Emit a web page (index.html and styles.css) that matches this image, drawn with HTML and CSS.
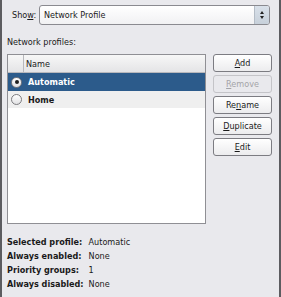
FILE: index.html
```html
<!DOCTYPE html>
<html lang="en">
<head>
    <meta charset="UTF-8">
    <title>Network Profiles</title>
    <link rel="stylesheet" href="styles.css">
</head>
<body>
    <div class="panel">
        <div class="show-row">
            <span class="show-label">Sho<u>w</u>:</span>
            <div class="combo">
                <span class="combo-text">Network Profile</span>
                <span class="combo-spin">
                    <span class="arrow-up"></span>
                    <span class="arrow-down"></span>
                </span>
            </div>
        </div>

        <div class="section-label">Network profiles:</div>

        <div class="main-row">
            <div class="tree">
                <div class="tree-header">
                    <div class="col-check"></div>
                    <div class="col-name">Name</div>
                </div>
                <div class="tree-row selected">
                    <span class="radio checked"></span>
                    <span class="row-name">Automatic</span>
                </div>
                <div class="tree-row alt">
                    <span class="radio"></span>
                    <span class="row-name">Home</span>
                </div>
            </div>

            <div class="buttons">
                <button class="btn"><u>A</u>dd</button>
                <button class="btn" disabled><u>R</u>emove</button>
                <button class="btn">Re<u>n</u>ame</button>
                <button class="btn"><u>D</u>uplicate</button>
                <button class="btn"><u>E</u>dit</button>
            </div>
        </div>

        <div class="info">
            <span class="info-label">Selected profile:</span><span>Automatic</span>
            <span class="info-label">Always enabled:</span><span>None</span>
            <span class="info-label">Priority groups:</span><span>1</span>
            <span class="info-label">Always disabled:</span><span>None</span>
        </div>
    </div>
</body>
</html>
```

FILE: styles.css
```css
body {
    margin: 0;
    padding: 0;
    background: #e9e9ed;
    font-family: "DejaVu Sans Condensed", "DejaVu Sans", sans-serif;
    font-size: 9px;
    color: #1a1a1a;
}

.panel {
    width: 277px;
    height: 297px;
    border-left: 2px solid #5c5c60;
    border-right: 2px solid #5c5c60;
    box-sizing: content-box;
}

u {
    text-decoration: underline;
    text-underline-offset: 1px;
}

.show-row {
    display: flex;
    align-items: center;
    padding: 5px 0 0 10px;
    height: 20px;
}

.show-label {
    width: 27px;
}

.combo {
    display: flex;
    align-items: stretch;
    width: 229px;
    height: 18px;
    border: 1px solid #8a8a90;
    border-radius: 3px;
    background: linear-gradient(to bottom, #ffffff, #f1f1f3);
    overflow: hidden;
}

.combo-text {
    flex: 1;
    display: flex;
    align-items: center;
    padding-left: 4px;
}

.combo-spin {
    width: 14px;
    display: flex;
    flex-direction: column;
    align-items: center;
    justify-content: center;
    gap: 2px;
    background: linear-gradient(to bottom, #d9e1ea, #c7d0da);
    border-left: 1px solid #b4bcc6;
}

.arrow-up {
    width: 0;
    height: 0;
    border-left: 2px solid transparent;
    border-right: 2px solid transparent;
    border-bottom: 3px solid #222;
}

.arrow-down {
    width: 0;
    height: 0;
    border-left: 2px solid transparent;
    border-right: 2px solid transparent;
    border-top: 3px solid #222;
}

.section-label {
    padding: 12px 0 0 5px;
    height: 17px;
}

.main-row {
    display: flex;
    align-items: flex-start;
    padding-left: 5px;
    gap: 7px;
}

.tree {
    width: 197px;
    height: 168px;
    border: 1px solid #8f8f94;
    background: #fff;
}

.tree-header {
    display: flex;
    height: 17px;
    background: linear-gradient(to bottom, #f7f7f7, #e4e4e6);
    border-bottom: 1px solid #b8b8bc;
}

.col-check {
    width: 15px;
    border-right: 1px solid #b8b8bc;
}

.col-name {
    display: flex;
    align-items: center;
    padding-left: 2px;
}

.tree-row {
    display: flex;
    align-items: center;
    height: 18px;
    font-weight: bold;
}

.tree-row.selected {
    background: #2c5b8b;
    color: #fff;
}

.tree-row.alt {
    background: #efefef;
    height: 17px;
}

.radio {
    width: 9px;
    height: 9px;
    margin: 0 6px 0 3px;
    border: 1px solid #7c7c80;
    border-radius: 50%;
    background: linear-gradient(to bottom, #ffffff, #e2e2e4);
    display: flex;
    align-items: center;
    justify-content: center;
}

.radio.checked::after {
    content: "";
    width: 4px;
    height: 4px;
    border-radius: 50%;
    background: #1e1e1e;
}

.buttons {
    display: flex;
    flex-direction: column;
    gap: 3px;
}

.btn {
    width: 59px;
    height: 18px;
    padding: 0;
    font-family: inherit;
    font-size: 9px;
    color: #1a1a1a;
    border: 1px solid #7c7c82;
    border-radius: 3px;
    background: linear-gradient(to bottom, #ffffff, #ececee);
}

.btn:disabled {
    color: #a4a4a8;
    border-color: #c4c4c8;
    background: #e9e9ed;
}

.info {
    display: grid;
    grid-template-columns: auto 1fr;
    column-gap: 5px;
    row-gap: 3px;
    line-height: 11px;
    padding: 13px 0 0 5px;
}

.info-label {
    font-weight: bold;
}
```
